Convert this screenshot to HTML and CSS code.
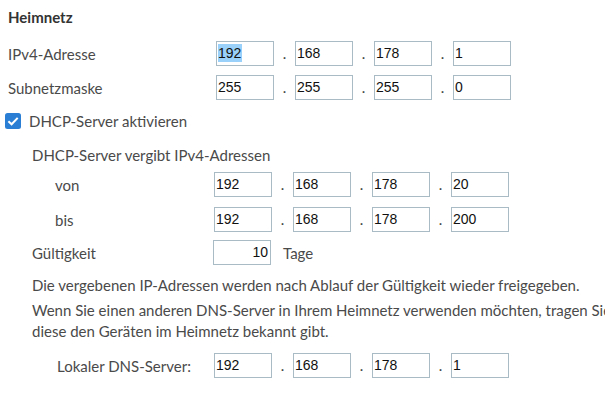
FILE: index.html
```html
<!DOCTYPE html>
<html lang="de">
<head>
<meta charset="utf-8">
<title>Heimnetz</title>
<link rel="stylesheet" href="styles.css">
</head>
<body>
<div class="page">
  <h2 class="title">Heimnetz</h2>

  <div class="row r-ipv4">
    <span class="label l-main">IPv4-Adresse</span>
    <div class="ip">
      <div class="box"><span class="sel">192</span></div><span class="dot">.</span>
      <div class="box">168</div><span class="dot">.</span>
      <div class="box">178</div><span class="dot">.</span>
      <div class="box">1</div>
    </div>
  </div>

  <div class="row r-mask">
    <span class="label l-main">Subnetzmaske</span>
    <div class="ip">
      <div class="box">255</div><span class="dot">.</span>
      <div class="box">255</div><span class="dot">.</span>
      <div class="box">255</div><span class="dot">.</span>
      <div class="box">0</div>
    </div>
  </div>

  <div class="row r-check">
    <span class="check">
      <svg width="16" height="16" viewBox="0 0 16 16"><rect x="0" y="0" width="16" height="16" rx="2.5" fill="#2a7fd4"/><path d="M3.4 8.2 L6.6 11.3 L12.7 4.9" fill="none" stroke="#fff" stroke-width="2"/></svg>
    </span>
    <span class="check-text">DHCP-Server aktivieren</span>
  </div>

  <div class="row r-sub">
    <span class="sub">DHCP-Server vergibt IPv4-Adressen</span>
  </div>

  <div class="row r-von">
    <span class="label l-range">von</span>
    <div class="ip">
      <div class="box">192</div><span class="dot">.</span>
      <div class="box">168</div><span class="dot">.</span>
      <div class="box">178</div><span class="dot">.</span>
      <div class="box">20</div>
    </div>
  </div>

  <div class="row r-bis">
    <span class="label l-range">bis</span>
    <div class="ip">
      <div class="box">192</div><span class="dot">.</span>
      <div class="box">168</div><span class="dot">.</span>
      <div class="box">178</div><span class="dot">.</span>
      <div class="box">200</div>
    </div>
  </div>

  <div class="row r-lease">
    <span class="label l-lease">Gültigkeit</span>
    <div class="box box-right">10</div>
    <span class="unit">Tage</span>
  </div>

  <p class="para p1">Die vergebenen IP-Adressen werden nach Ablauf der Gültigkeit wieder freigegeben.</p>
  <p class="para p2"><span class="line">Wenn Sie einen anderen DNS-Server in Ihrem Heimnetz verwenden möchten, tragen Sie</span><span class="line">diese den Geräten im Heimnetz bekannt gibt.</span></p>

  <div class="row r-dns">
    <span class="label l-dns">Lokaler DNS-Server:</span>
    <div class="ip">
      <div class="box">192</div><span class="dot">.</span>
      <div class="box">168</div><span class="dot">.</span>
      <div class="box">178</div><span class="dot">.</span>
      <div class="box">1</div>
    </div>
  </div>
</div>
</body>
</html>
```
FILE: styles.css
```css
html, body {
  margin: 0;
  padding: 0;
  background: #ffffff;
  overflow: hidden;
}
body {
  font-family: Lato, "Open Sans", sans-serif;
  font-size: 15px;
  color: #4a4a4a;
}
.page {
  padding: 7px 0 0 8px;
  width: 900px;
}
.title {
  margin: 0 0 14px 0;
  font-size: 15px;
  line-height: 20px;
  font-weight: bold;
  color: #333;
}
.row {
  display: flex;
  align-items: center;
  height: 25px;
}
.label { flex: none; }
.l-main { width: 208px; }
.l-range { width: 159px; padding-left: 47px; }
.l-lease { width: 181px; padding-left: 24px; }
.l-dns { width: 157px; padding-left: 49px; }

.ip {
  display: flex;
  align-items: center;
}
.box {
  box-sizing: border-box;
  width: 58px;
  height: 25px;
  border: 1px solid #a9bcc6;
  font-family: "Liberation Sans", Arial, sans-serif;
  font-size: 14px;
  color: #111;
  line-height: 23px;
  padding-left: 1px;
  white-space: nowrap;
}
.box-right {
  text-align: right;
  padding-left: 0;
  padding-right: 2px;
}
.sel {
  background: #99d1fb;
  display: inline-block;
  line-height: 18px;
  padding-right: 1px;
}
.dot {
  width: 21px;
  text-align: center;
  color: #444;
  font-size: 15px;
  line-height: 25px;
}
.unit {
  margin-left: 12px;
}

.r-ipv4 { margin-bottom: 9px; }
.r-mask { margin-bottom: 8px; }
.r-check { margin-left: -3px; margin-bottom: 9px; }
.check { width: 16px; height: 16px; display: inline-flex; }
.check-text { margin-left: 8px; }
.r-sub { margin-bottom: 5px; }
.sub { padding-left: 24px; }
.r-von { margin-bottom: 10px; }
.r-bis { margin-bottom: 8px; }
.r-lease { margin-bottom: 10px; }

.para {
  margin: 0 0 4px 24px;
  line-height: 21px;
}
.line {
  display: block;
  white-space: nowrap;
}
.p2 { margin-bottom: 11px; }
```
